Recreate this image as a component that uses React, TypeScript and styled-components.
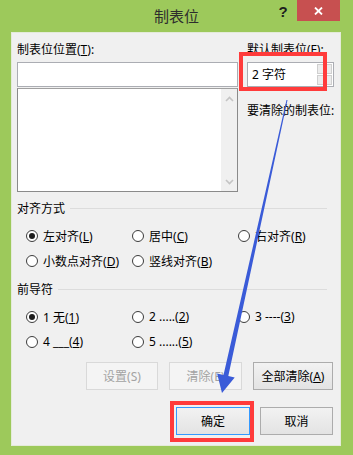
import React from "react";
import styled, { createGlobalStyle } from "styled-components";

const GlobalStyle = createGlobalStyle`
  html, body {
    margin: 0;
    padding: 0;
  }
  body {
    font-family: "Noto Sans", "Noto Sans CJK SC", "Microsoft YaHei", sans-serif;
    font-size: 12px;
    color: #000;
  }
`;

const Window = styled.div`
  position: relative;
  width: 353px;
  height: 455px;
  background: #9dc95b;
  display: flex;
  flex-direction: column;
  overflow: hidden;
`;

const TitleBar = styled.div`
  height: 32px;
  flex-shrink: 0;
  display: grid;
  grid-template-columns: 1fr auto 1fr;
  align-items: start;
`;

const Title = styled.div`
  font-size: 15px;
  line-height: 33px;
  color: #2d2d2d;
`;

const TitleControls = styled.div`
  display: flex;
  justify-content: flex-end;
  padding-right: 13px;
`;

const HelpButton = styled.div`
  width: 28px;
  height: 22px;
  font: bold 15px "Liberation Sans", Arial, sans-serif;
  line-height: 24px;
  text-align: center;
  color: #1e1e1e;
`;

const CloseButton = styled.div`
  width: 43px;
  height: 21px;
  background: #c75050;
  display: flex;
  align-items: center;
  justify-content: center;
`;

const Panel = styled.div`
  flex: 1;
  margin: 0 12px 9px 11px;
  background: #f0f0f0;
  border: 1px solid #e4ebd9;
  padding: 9px 7px 0 5px;
  display: flex;
  flex-direction: column;
`;

const TopGrid = styled.div`
  display: grid;
  grid-template-columns: 221px 1fr;
  column-gap: 9px;
`;

const Column = styled.div`
  display: flex;
  flex-direction: column;
`;

const Label = styled.div<{ $gap?: number }>`
  line-height: 16px;
  height: 16px;
  margin-top: ${({ $gap }) => $gap ?? 0}px;
  white-space: nowrap;
`;

const Key = styled.span`
  text-decoration: underline;
  text-underline-offset: 1px;
`;

const TextBox = styled.div`
  margin-top: 4px;
  height: 25px;
  box-sizing: border-box;
  border: 1px solid #abadb3;
  background: #fff;
`;

const ListBox = styled.div`
  margin-top: 1px;
  height: 104px;
  box-sizing: border-box;
  border: 1px solid #8a8a8a;
  border-top-color: #a0a0a0;
  background: #fff;
  display: flex;
  justify-content: flex-end;
`;

const ScrollTrack = styled.div`
  width: 16px;
  background: #f0f0f0;
  display: flex;
  flex-direction: column;
  justify-content: space-between;
  align-items: center;
  padding: 7px 0 6px;
`;

const SpinBox = styled.div`
  margin-top: 4px;
  height: 25px;
  box-sizing: border-box;
  border: 1px solid #abadb3;
  background: #fff;
  display: flex;
`;

const SpinValue = styled.div`
  flex: 1;
  padding-left: 4px;
  line-height: 23px;
`;

const SpinButtons = styled.div`
  width: 15px;
  padding: 1px;
  display: flex;
  flex-direction: column;
  gap: 1px;
  background: #fff;
`;

const SpinButton = styled.div`
  flex: 1;
  border: 1px solid #cfcfcf;
  background: #ececec;
  display: flex;
  align-items: center;
  justify-content: center;
  &::after {
    content: "";
    width: 2px;
    height: 2px;
    background: #1a1a1a;
  }
`;

const GroupHeader = styled.div`
  margin-top: 8px;
  height: 16px;
  display: flex;
  align-items: center;
  gap: 5px;
  padding-right: 6px;
`;

const GroupLine = styled.div`
  flex: 1;
  height: 1px;
  background: #dcdcdc;
`;

const RadioGrid = styled.div`
  margin-top: 7px;
  padding-left: 9px;
  display: grid;
  grid-template-columns: repeat(3, 106px);
  grid-auto-rows: 25px;
`;

const RadioItem = styled.label`
  display: flex;
  align-items: center;
  gap: 5px;
  white-space: nowrap;
`;

const RadioCircle = styled.span<{ $checked?: boolean }>`
  width: 12px;
  height: 12px;
  box-sizing: border-box;
  border-radius: 50%;
  border: 1px solid #3c3c3c;
  background: #fff;
  display: flex;
  align-items: center;
  justify-content: center;
  flex-shrink: 0;
  &::after {
    content: "";
    width: 6px;
    height: 6px;
    border-radius: 50%;
    background: ${({ $checked }) => ($checked ? "#1c1c1c" : "transparent")};
  }
`;

const ButtonRow = styled.div<{ $top: number }>`
  margin-top: ${({ $top }) => $top}px;
  display: flex;
  justify-content: flex-end;
  gap: ${({ $top }) => ($top > 10 ? 10 : 11)}px;
`;

const Button = styled.div<{ $width: number; $disabled?: boolean; $default?: boolean }>`
  width: ${({ $width }) => $width}px;
  height: 28px;
  box-sizing: border-box;
  display: flex;
  align-items: center;
  justify-content: center;
  border: 1px solid
    ${({ $disabled, $default }) => ($default ? "#3399ff" : $disabled ? "#d9d9d9" : "#acacac")};
  background: ${({ $disabled }) =>
    $disabled ? "#f4f4f4" : "linear-gradient(#f2f2f2, #e3e3e3)"};
  color: ${({ $disabled }) => ($disabled ? "#a3a3a3" : "#000")};
  white-space: nowrap;
  overflow: hidden;
`;

const Annotations = styled.svg`
  position: absolute;
  left: 0;
  top: 0;
  pointer-events: none;
`;

const Chevron = ({ up }: { up?: boolean }) => (
  <svg width="9" height="6" viewBox="0 0 9 6">
    <polyline
      points={up ? "1,5 4.5,1.5 8,5" : "1,1 4.5,4.5 8,1"}
      fill="none"
      stroke="#c4c4c4"
      strokeWidth="1.6"
    />
  </svg>
);

const alignOptions = [
  { text: "左对齐", key: "L", checked: true },
  { text: "居中", key: "C" },
  { text: "右对齐", key: "R" },
  { text: "小数点对齐", key: "D" },
  { text: "竖线对齐", key: "B" },
];

const leaderOptions = [
  { text: "1 无", key: "1", checked: true },
  { text: "2 .....", key: "2" },
  { text: "3 ----", key: "3" },
  { text: "4 ___", key: "4" },
  { text: "5 ......", key: "5" },
];

type Option = { text: string; key: string; checked?: boolean };

const RadioGroup = ({ options }: { options: Option[] }) => (
  <RadioGrid>
    {options.map((o) => (
      <RadioItem key={o.key}>
        <RadioCircle $checked={o.checked} />
        <span>
          {o.text}(<Key>{o.key}</Key>)
        </span>
      </RadioItem>
    ))}
  </RadioGrid>
);

export default function App() {
  return (
    <Window>
      <GlobalStyle />
      <TitleBar>
        <div />
        <Title>制表位</Title>
        <TitleControls>
          <HelpButton>?</HelpButton>
          <CloseButton>
            <svg width="9" height="8" viewBox="0 0 9 8">
              <path d="M1 0.5 L8 7.5 M8 0.5 L1 7.5" stroke="#fff" strokeWidth="1.8" />
            </svg>
          </CloseButton>
        </TitleControls>
      </TitleBar>

      <Panel>
        <TopGrid>
          <Column>
            <Label>
              制表位位置(<Key>T</Key>):
            </Label>
            <TextBox />
            <ListBox>
              <ScrollTrack>
                <Chevron up />
                <Chevron />
              </ScrollTrack>
            </ListBox>
          </Column>
          <Column>
            <Label>
              默认制表位(<Key>F</Key>):
            </Label>
            <SpinBox>
              <SpinValue>2 字符</SpinValue>
              <SpinButtons>
                <SpinButton />
                <SpinButton />
              </SpinButtons>
            </SpinBox>
            <Label $gap={16}>要清除的制表位:</Label>
          </Column>
        </TopGrid>

        <GroupHeader>
          <span>对齐方式</span>
          <GroupLine />
        </GroupHeader>
        <RadioGroup options={alignOptions} />

        <GroupHeader>
          <span>前导符</span>
          <GroupLine />
        </GroupHeader>
        <RadioGroup options={leaderOptions} />

        <ButtonRow $top={8}>
          <Button $width={72} $disabled>
            设置(S)
          </Button>
          <Button $width={73} $disabled>
            清除(E)
          </Button>
          <Button $width={80}>
            全部清除(<Key>A</Key>)
          </Button>
        </ButtonRow>
        <ButtonRow $top={17}>
          <Button $width={74} $default>
            确定
          </Button>
          <Button $width={73}>取消</Button>
        </ButtonRow>
      </Panel>

      <Annotations width="353" height="455" viewBox="0 0 353 455">
        <rect x="241" y="54" width="84" height="35" fill="none" stroke="#ff3b3b" strokeWidth="4" />
        <rect x="172" y="403" width="80" height="37" fill="none" stroke="#ff3b3b" strokeWidth="4" />
        <polygon
          points="286.5,99.9 287.5,100.1 228.3,375.9 234.7,377.4 222,393 217.1,373.5 223.5,374.9"
          fill="#3a5bd8"
        />
      </Annotations>
    </Window>
  );
}
